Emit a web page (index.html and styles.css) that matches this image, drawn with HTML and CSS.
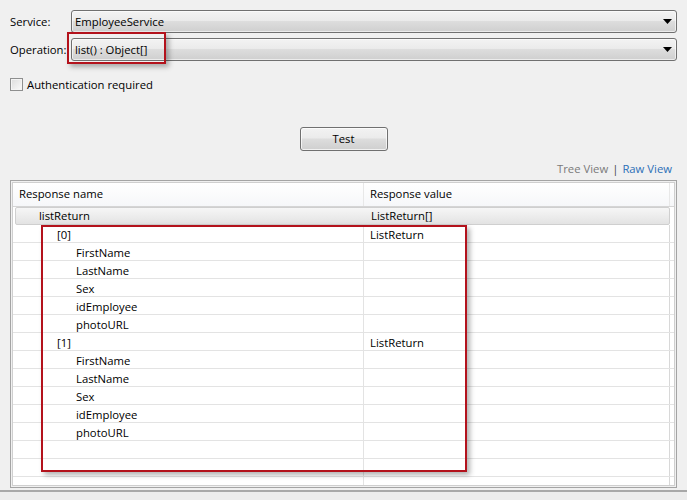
FILE: index.html
```html
<!DOCTYPE html>
<html>
<head>
<meta charset="utf-8">
<link rel="stylesheet" href="styles.css">
</head>
<body>
<div class="panel">
  <div class="field-row">
    <span class="flabel">Service:</span>
    <div class="select"><span>EmployeeService</span><svg class="arrow" width="9" height="5" viewBox="0 0 9 5"><path d="M0 0H9L4.5 5Z" fill="#000"/></svg></div>
  </div>
  <div class="field-row second">
    <span class="flabel">Operation:</span>
    <div class="select"><span>list() : Object[]</span><svg class="arrow" width="9" height="5" viewBox="0 0 9 5"><path d="M0 0H9L4.5 5Z" fill="#000"/></svg></div>
  </div>
  <label class="check"><span class="box"></span><span>Authentication required</span></label>
  <div class="actions"><button class="btn">Test</button></div>
  <div class="views"><span class="tree">Tree View</span><span class="sep">|</span><span class="raw">Raw View</span></div>
  <div class="frame">
    <div class="grid">
      <div class="row head"><div class="c1">Response name</div><div class="c2">Response value</div><div class="c3"></div></div>
      <div class="row sel"><div class="c1 l1">listReturn</div><div class="c2">ListReturn[]</div><div class="c3"></div></div>
      <div class="row"><div class="c1 l2">[0]</div><div class="c2">ListReturn</div><div class="c3"></div></div>
      <div class="row"><div class="c1 l3">FirstName</div><div class="c2"></div><div class="c3"></div></div>
      <div class="row"><div class="c1 l3">LastName</div><div class="c2"></div><div class="c3"></div></div>
      <div class="row"><div class="c1 l3">Sex</div><div class="c2"></div><div class="c3"></div></div>
      <div class="row"><div class="c1 l3">idEmployee</div><div class="c2"></div><div class="c3"></div></div>
      <div class="row"><div class="c1 l3">photoURL</div><div class="c2"></div><div class="c3"></div></div>
      <div class="row"><div class="c1 l2">[1]</div><div class="c2">ListReturn</div><div class="c3"></div></div>
      <div class="row"><div class="c1 l3">FirstName</div><div class="c2"></div><div class="c3"></div></div>
      <div class="row"><div class="c1 l3">LastName</div><div class="c2"></div><div class="c3"></div></div>
      <div class="row"><div class="c1 l3">Sex</div><div class="c2"></div><div class="c3"></div></div>
      <div class="row"><div class="c1 l3">idEmployee</div><div class="c2"></div><div class="c3"></div></div>
      <div class="row"><div class="c1 l3">photoURL</div><div class="c2"></div><div class="c3"></div></div>
      <div class="row"><div class="c1"></div><div class="c2"></div><div class="c3"></div></div>
      <div class="row"><div class="c1"></div><div class="c2"></div><div class="c3"></div></div>
      <div class="row"><div class="c1"></div><div class="c2"></div><div class="c3"></div></div>
    </div>
  </div>
</div>
<div class="status"></div>
<div class="mark mark-op"></div>
<div class="mark mark-rows"></div>
</body>
</html>
```

FILE: styles.css
```css
html, body {
  margin: 0;
  padding: 0;
  background: #f0f0f0;
  width: 687px;
  height: 500px;
  overflow: hidden;
  font-family: "Open Sans", "Noto Sans", sans-serif;
  font-size: 11.3px;
  color: #000;
  position: relative;
}
.panel {
  padding: 10px 10px 0 10px;
  display: flex;
  flex-direction: column;
}
.field-row {
  display: flex;
  align-items: center;
  height: 23px;
}
.field-row.second { margin-top: 5px; }
.flabel {
  width: 61px;
  flex: none;
}
.select {
  flex: 1;
  height: 21px;
  border: 1px solid #707070;
  border-radius: 3px;
  background: linear-gradient(#f3f3f3 0%, #ebebeb 45%, #dddddd 50%, #cfcfcf 100%);
  display: flex;
  align-items: center;
  justify-content: space-between;
  padding: 0 4px 0 3px;
  box-shadow: inset 0 0 0 1px rgba(255,255,255,0.6);
}
.check {
  margin-top: 17px;
  display: flex;
  align-items: center;
  gap: 4px;
  height: 13px;
}
.box {
  width: 11px;
  height: 11px;
  border: 1px solid #8e8f8f;
  background: linear-gradient(135deg, #dcdcdc, #fafafa);
  box-shadow: inset 0 0 0 1px #f4f4f4;
}
.actions {
  margin-top: 36px;
  display: flex;
  justify-content: center;
}
.btn {
  width: 88px;
  height: 24px;
  border: 1px solid #707070;
  border-radius: 3px;
  background: linear-gradient(#f2f2f2 0%, #ebebeb 45%, #dddddd 50%, #cfcfcf 100%);
  font-family: inherit;
  font-size: 11.3px;
  color: #000;
  padding: 0 0 2px 0;
  box-shadow: inset 0 0 0 1px rgba(255,255,255,0.7);
}
.views {
  margin-top: 10px;
  display: flex;
  justify-content: flex-end;
  gap: 4px;
  padding-right: 5px;
  height: 16px;
  line-height: 16px;
}
.tree { color: #7a7a7a; }
.sep { color: #444; }
.raw { color: #2c6fb7; }
.frame {
  margin-top: 3px;
  border: 1px solid #a4a4a4;
  padding: 1px;
  height: 304px;
}
.grid {
  border: 1px solid #cfcfcf;
  background: #fff;
  height: 302px;
  overflow: hidden;
  display: flex;
  flex-direction: column;
}
.row {
  display: flex;
  height: 18px;
  flex: none;
  border-bottom: 1px solid #e3e3e3;
  box-sizing: border-box;
  line-height: 19px;
}
.row.head {
  height: 24px;
  line-height: 22px;
  background: linear-gradient(#ffffff, #f6f7f9);
  border-bottom: 1px solid #d5d5d5;
}
.c1 {
  width: 351px;
  flex: none;
  padding-left: 6px;
  box-sizing: border-box;
  border-right: 1px solid #e3e3e3;
  white-space: nowrap;
}
.c2 {
  width: 306px;
  flex: none;
  padding-left: 6px;
  box-sizing: border-box;
  border-right: 1px solid #d8d8d8;
}
.c3 { flex: 1; }
.head .c1, .head .c2 { border-right-color: #e8e8e8; }
.l1 { padding-left: 25px; }
.l2 { padding-left: 44px; }
.l3 { padding-left: 63px; }
.row.sel {
  margin: 0 4px 0 2px;
  border: 1px solid #cfcfcf;
  border-radius: 2px;
  background: linear-gradient(#f6f6f6, #e3e3e3);
  height: 18px;
  line-height: 16px;
}
.row.sel .c1 { width: 349px; padding-left: 23px; border-right: none; }
.row.sel .c2 { width: 301px; border-right: none; }
.status {
  position: absolute;
  left: 0;
  right: 0;
  top: 490px;
  height: 10px;
  border-top: 2px solid #a8a8a8;
  background: #ececec;
  box-sizing: border-box;
}
.mark {
  position: absolute;
  border: 2px solid #b3121c;
  box-shadow: 3px 3px 5px rgba(0,0,0,0.3);
  pointer-events: none;
}
.mark-op {
  left: 67px;
  top: 32px;
  width: 95px;
  height: 28px;
}
.mark-rows {
  left: 41px;
  top: 225px;
  width: 422px;
  height: 243px;
}
```
